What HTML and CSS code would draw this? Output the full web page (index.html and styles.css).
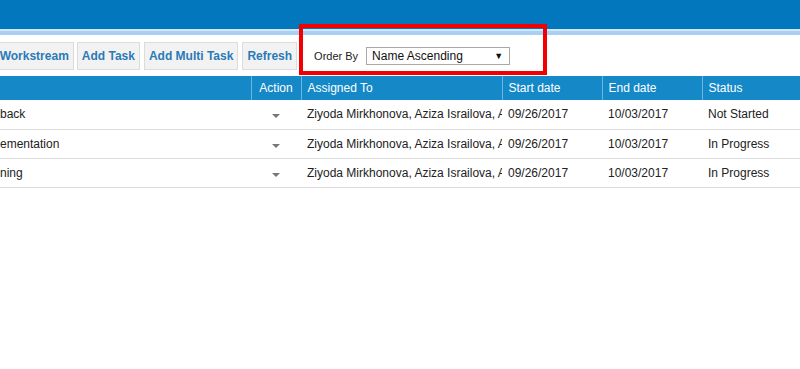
FILE: index.html
```html
<!DOCTYPE html>
<html lang="en">
<head>
    <meta charset="UTF-8">
    <title>Tasks</title>
    <link rel="stylesheet" href="styles.css">
</head>
<body>
    <div class="top-bar"></div>
    <div class="top-stripe"></div>

    <div class="toolbar">
        <button class="tool-btn first">Add Workstream</button>
        <button class="tool-btn">Add Task</button>
        <button class="tool-btn">Add Multi Task</button>
        <button class="tool-btn">Refresh</button>
        <div class="order-box">
            <span class="order-label">Order By</span>
            <div class="order-select">
                <span>Name Ascending</span>
                <span class="arrow">&#9660;</span>
            </div>
        </div>
    </div>

    <table class="task-table">
        <thead>
            <tr>
                <th class="col-name"></th>
                <th class="col-action">Action</th>
                <th class="col-assigned">Assigned To</th>
                <th class="col-date">Start date</th>
                <th class="col-date">End date</th>
                <th class="col-status">Status</th>
            </tr>
        </thead>
        <tbody>
            <tr>
                <td class="col-name">back</td>
                <td class="col-action"><span class="caret"></span></td>
                <td class="col-assigned"><div class="clip">Ziyoda Mirkhonova, Aziza Israilova, Aziza</div></td>
                <td>09/26/2017</td>
                <td>10/03/2017</td>
                <td>Not Started</td>
            </tr>
            <tr>
                <td class="col-name">ementation</td>
                <td class="col-action"><span class="caret"></span></td>
                <td class="col-assigned"><div class="clip">Ziyoda Mirkhonova, Aziza Israilova, Aziza</div></td>
                <td>09/26/2017</td>
                <td>10/03/2017</td>
                <td>In Progress</td>
            </tr>
            <tr>
                <td class="col-name">ning</td>
                <td class="col-action"><span class="caret"></span></td>
                <td class="col-assigned"><div class="clip">Ziyoda Mirkhonova, Aziza Israilova, Aziza</div></td>
                <td>09/26/2017</td>
                <td>10/03/2017</td>
                <td>In Progress</td>
            </tr>
        </tbody>
    </table>
</body>
</html>
```

FILE: styles.css
```css
body {
    margin: 0;
    padding: 0;
    font-family: "Liberation Sans", Arial, sans-serif;
    font-size: 12px;
    color: #222;
    background: #fff;
    overflow: hidden;
}
.top-bar {
    height: 29px;
    background-color: #0277bd;
}
.top-stripe {
    height: 6px;
    background-color: #a9d0f2;
    border-top: 2px solid #d3e7f8;
    box-sizing: border-box;
}
.toolbar {
    display: flex;
    align-items: flex-start;
    height: 41px;
    gap: 4px;
}
.tool-btn {
    flex-shrink: 0;
    height: 28px;
    margin-top: 7px;
    padding: 0 4px;
    font-family: "Liberation Sans", Arial, sans-serif;
    font-size: 12px;
    font-weight: bold;
    color: #2a7ab8;
    background-color: #f2f2f2;
    border: 1px solid #dcdcdc;
}
.tool-btn.first {
    margin-left: -32px;
    margin-right: -1px;
}
.order-box {
    display: flex;
    align-items: center;
    align-self: flex-start;
    flex-shrink: 0;
    height: 51px;
    width: 248px;
    margin-top: -11px;
    margin-left: -2px;
    padding: 19px 0 0 11px;
    border: 4px solid #f00000;
    box-sizing: border-box;
}
.order-box > * {
    align-self: flex-start;
}
.order-label {
    font-size: 11px;
    line-height: 18px;
    color: #222;
    margin-right: 8px;
}
.order-select {
    display: flex;
    justify-content: space-between;
    align-items: center;
    width: 144px;
    height: 18px;
    padding: 0 6px 0 5px;
    box-sizing: border-box;
    border: 1px solid #a9a9a9;
    font-size: 12px;
    color: #111;
}
.order-select .arrow {
    font-size: 9px;
}
.task-table {
    border-collapse: collapse;
    table-layout: fixed;
    width: 800px;
}
.task-table th,
.task-table td {
    box-sizing: border-box;
}
.task-table th {
    height: 24px;
    padding: 0 6px;
    background-color: #1589c8;
    color: #fff;
    font-weight: normal;
    text-align: left;
    border-left: 1px solid #6bb5e0;
}
.task-table th.col-name {
    border-left: none;
}
.task-table th.col-action {
    text-align: center;
    padding: 0;
}
.task-table td {
    height: 29px;
    padding: 0 6px;
    border-bottom: 1px solid #dcdcdc;
    white-space: nowrap;
    overflow: hidden;
    vertical-align: middle;
}
.task-table td.col-name {
    padding-left: 0;
}
.col-name { width: 251px; }
.col-action { width: 50px; }
.col-assigned { width: 201px; }
.col-date { width: 100px; }
.col-status { width: 98px; }
.task-table td.col-action {
    text-align: center;
    padding: 0;
}
.task-table td.col-assigned {
    padding-right: 0;
}
.clip {
    overflow: hidden;
    white-space: nowrap;
}
.caret {
    display: inline-block;
    width: 0;
    height: 0;
    margin-top: 2px;
    border-left: 4px solid transparent;
    border-right: 4px solid transparent;
    border-top: 4px solid #777;
}
```
